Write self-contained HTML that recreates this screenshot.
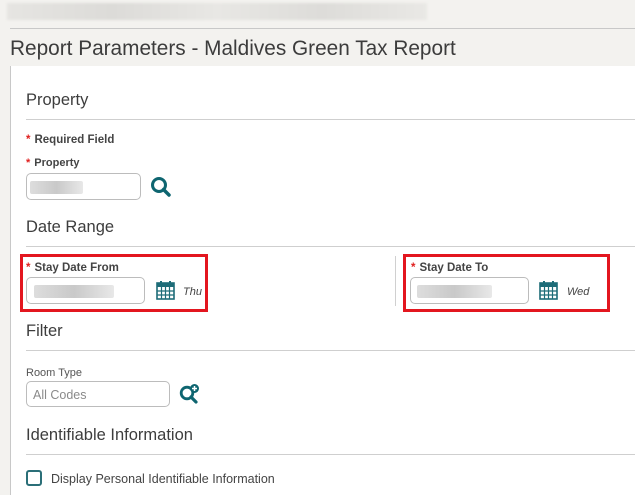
<!DOCTYPE html>
<html><head><style>
*{margin:0;padding:0;box-sizing:border-box}
body{width:635px;height:495px;overflow:hidden;background:#f3f2ef;font-family:"Liberation Sans",sans-serif;color:#3a3a3a;position:relative}
.a{position:absolute}
.h{font-size:16.5px;color:#3d3d3d}
.ln{position:absolute;left:26px;right:0;height:1px;background:#cfcfcf}
.lbl{font-size:11.5px;font-weight:bold;color:#444}
.st{color:#e0201f;margin-right:4px}
.inp{position:absolute;border:1px solid #bcbcbc;border-radius:5px;background:#fff;height:27px}
.blur{position:absolute;top:7px;left:7px;height:13px;background:linear-gradient(90deg,#ddd,#c9c9c9,#e8e8e8);border-radius:2px}
.red{position:absolute;border:3px solid #e3161f}
.day{font-size:11px;font-style:italic;color:#444}
</style></head><body>
<div class="a" style="left:7px;top:3px;width:420px;height:17px;background:linear-gradient(90deg,#e6e5e2,#dcdbd8,#e8e7e4,#dddcd9,#e9e8e5);filter:blur(1px)"></div>
<div class="a" style="left:10px;top:28px;width:625px;height:1px;background:#c8c8c8"></div>
<div class="a" style="left:10px;top:37px;font-size:20.8px;color:#3c3c3c">Report Parameters - Maldives Green Tax Report</div>
<div class="a" style="left:10px;top:66px;width:625px;height:429px;background:#fff;border-left:1px solid #c8c8c8"></div>

<div class="a h" style="left:26px;top:91px">Property</div>
<div class="ln" style="top:119px"></div>
<div class="a lbl" style="left:26px;top:134px"><span class="st">*</span>Required Field</div>
<div class="a lbl" style="left:26px;top:157px;font-size:11px"><span class="st">*</span>Property</div>
<div class="inp" style="left:26px;top:173px;width:115px"><div class="blur" style="left:3px;width:53px"></div></div>
<svg class="a" style="left:150px;top:176px" width="22" height="22" viewBox="0 0 22 22"><circle cx="9" cy="9" r="6.5" fill="none" stroke="#0e6570" stroke-width="3"/><path d="M13.5 13.5L19 19" stroke="#0e6570" stroke-width="3.5" stroke-linecap="round"/></svg>

<div class="a h" style="left:26px;top:218px">Date Range</div>
<div class="ln" style="top:246px"></div>
<div class="red" style="left:20px;top:254px;width:188px;height:58px"></div>
<div class="a lbl" style="left:26px;top:262px"><span class="st">*</span>Stay Date From</div>
<div class="inp" style="left:26px;top:277px;width:119px"><div class="blur" style="left:7px;width:80px"></div></div>
<svg class="a" style="left:156px;top:280px" width="19" height="20" viewBox="0 0 19 20"><rect x="1" y="3" width="17" height="16" fill="none" stroke="#1d6c78" stroke-width="1.6"/><rect x="1" y="3" width="17" height="4" fill="#1d6c78"/><path d="M5 1v4M14 1v4" stroke="#1d6c78" stroke-width="2"/><path d="M1 11h17M1 15h17M5.5 7v12M9.5 7v12M13.5 7v12" stroke="#1d6c78" stroke-width="1.2"/></svg>
<div class="a day" style="left:183px;top:286px">Thu</div>

<div class="a" style="left:395px;top:256px;width:1px;height:50px;background:#d0d0d0"></div>
<div class="red" style="left:403px;top:254px;width:207px;height:58px"></div>
<div class="a lbl" style="left:411px;top:262px"><span class="st">*</span>Stay Date To</div>
<div class="inp" style="left:410px;top:277px;width:119px"><div class="blur" style="left:6px;width:75px"></div></div>
<svg class="a" style="left:539px;top:280px" width="19" height="20" viewBox="0 0 19 20"><rect x="1" y="3" width="17" height="16" fill="none" stroke="#1d6c78" stroke-width="1.6"/><rect x="1" y="3" width="17" height="4" fill="#1d6c78"/><path d="M5 1v4M14 1v4" stroke="#1d6c78" stroke-width="2"/><path d="M1 11h17M1 15h17M5.5 7v12M9.5 7v12M13.5 7v12" stroke="#1d6c78" stroke-width="1.2"/></svg>
<div class="a day" style="left:567px;top:286px">Wed</div>

<div class="a h" style="left:26px;top:322px">Filter</div>
<div class="ln" style="top:350px"></div>
<div class="a" style="left:26px;top:367px;font-size:11px;color:#555">Room Type</div>
<div class="inp" style="left:26px;top:381px;width:144px;height:26px"><div class="a" style="left:6px;top:6px;font-size:12.5px;color:#8a8a8a">All Codes</div></div>
<svg class="a" style="left:179px;top:383px" width="22" height="22" viewBox="0 0 22 22"><circle cx="8" cy="10" r="5.8" fill="none" stroke="#0e6570" stroke-width="2.8"/><path d="M12 14l5 5" stroke="#0e6570" stroke-width="3.2" stroke-linecap="round"/><circle cx="15.5" cy="5.5" r="4.5" fill="#0e6570"/><path d="M15.5 3v5M13 5.5h5" stroke="#fff" stroke-width="1.5"/></svg>

<div class="a h" style="left:26px;top:426px">Identifiable Information</div>
<div class="ln" style="top:454px"></div>
<div class="a" style="left:26px;top:470px;width:16px;height:16px;border:2px solid #2b6f78;border-radius:3px"></div>
<div class="a" style="left:51px;top:472px;font-size:12.5px;color:#444">Display Personal Identifiable Information</div>
</body></html>
